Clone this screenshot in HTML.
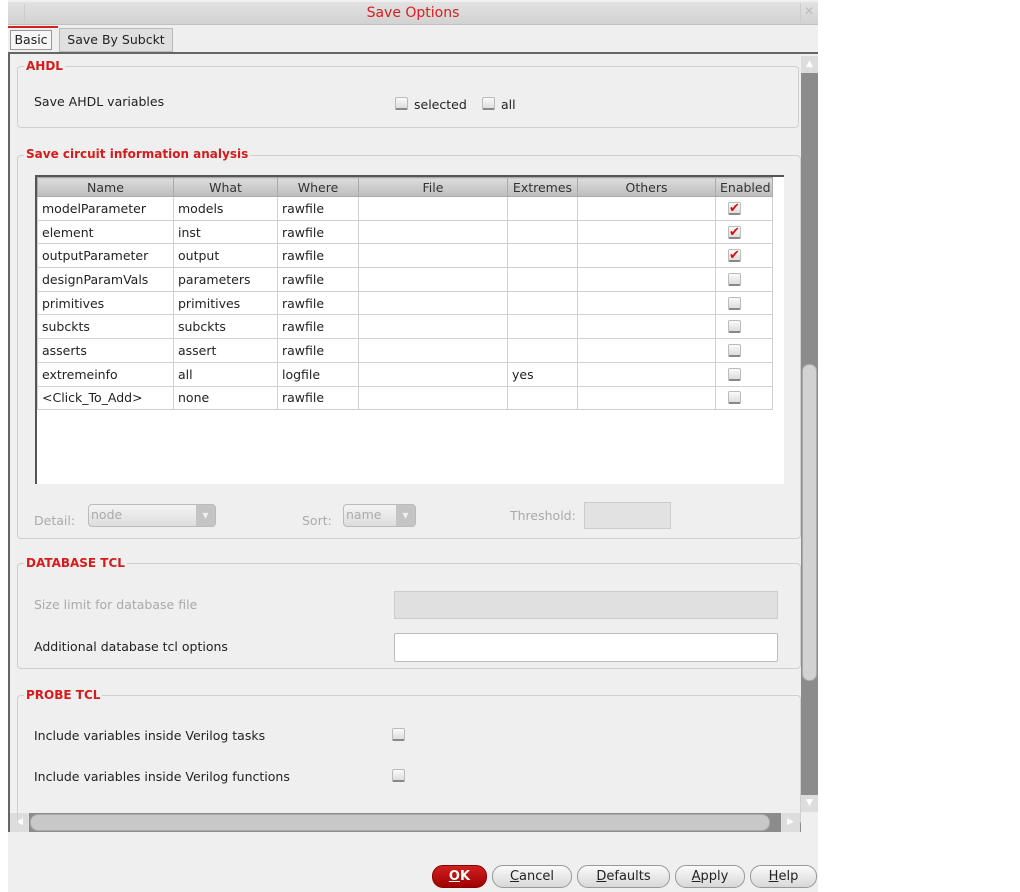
<!DOCTYPE html>
<html><head><meta charset="utf-8"><style>
*{box-sizing:border-box;margin:0;padding:0}
body{width:1020px;height:892px;background:#fff;font-family:"DejaVu Sans","Liberation Sans",sans-serif;font-size:12.5px;color:#222;position:relative;overflow:hidden}
.a{position:absolute}
.win{left:8px;top:0;width:810px;height:892px;background:#efefef}
.title{left:8px;top:2px;width:810px;height:23px;background:linear-gradient(#e2e2e2,#d2d2d2);border-bottom:1px solid #c0c0c0;text-align:center;color:#d42020;font-size:14px;line-height:23px}
.grp{border:1px solid #cfcfcf;border-radius:4px}
.lg{color:#d41c1c;font-weight:bold;font-size:12px;background:#efefef;padding:0 2px}
.cb{width:13px;height:13px;border:1px solid #bbb;border-bottom:2px solid #888;border-radius:2px;background:linear-gradient(#fafafa,#ddd)}
table{border-collapse:collapse;background:#fff;table-layout:fixed}
td,th{border:1px solid #d0d0d0;height:23.7px;padding:0 4px;font-weight:normal;text-align:left;white-space:nowrap;overflow:hidden}
th{height:19px;background:linear-gradient(#dcdcdc,#bdbdbd);text-align:center;border-color:#aaa;color:#333}
.btn{top:865px;height:23px;border:1px solid #999;border-radius:11px;background:linear-gradient(#fafafa,#d8d8d8);text-align:center;line-height:21px;font-size:13px}
.dis{color:#aaa}
.chk{color:#d01010;font-weight:bold;font-size:13px;line-height:11px;text-align:center}
</style></head><body>
<div class="a win"></div>
<div class="a title">Save Options</div>
<div class="a" style="left:9px;top:4px;width:16px;height:18px;border-right:1px solid #ccc"></div>
<div class="a" style="left:800px;top:4px;width:17px;height:18px;border-left:1px solid #ccc;color:#bbb;font-size:12px;text-align:center">✕</div>
<div class="a" style="left:8px;top:26px;width:50px;height:2px;background:#d42020"></div>
<div class="a" style="left:10px;top:30px;width:42px;height:20px;border:1px solid #999;background:#f6f6f6;line-height:18px;text-align:center;font-size:12.5px">Basic</div>
<div class="a" style="left:59px;top:28px;width:114px;height:24px;border:1px solid #bbb;background:#e0e0e0;line-height:22px;text-align:center;font-size:12.5px">Save By Subckt</div>
<div class="a" style="left:8px;top:52px;width:810px;height:2px;background:#666"></div>
<div class="a" style="left:8px;top:52px;width:2px;height:780px;background:#666"></div>
<div class="a" style="left:801px;top:56px;width:17px;height:756px;background:#8c8c8c"></div>
<div class="a" style="left:801px;top:56px;width:17px;height:17px;background:#ddd;color:#fff;font-size:9px;text-align:center;line-height:17px">▲</div>
<div class="a" style="left:802px;top:364px;width:15px;height:317px;background:#d2d2d2;border-radius:7px;border:1px solid #aaa"></div>
<div class="a" style="left:801px;top:795px;width:17px;height:17px;background:#ddd;color:#fff;font-size:9px;text-align:center;line-height:17px">▼</div>
<div class="a" style="left:10px;top:813px;width:791px;height:19px;background:#8c8c8c"></div>
<div class="a" style="left:10px;top:813px;width:19px;height:19px;background:#ddd;color:#fff;font-size:9px;text-align:center;line-height:19px">◀</div>
<div class="a" style="left:30px;top:814px;width:740px;height:17px;background:#c8c8c8;border-radius:8px;border:1px solid #aaa"></div>
<div class="a" style="left:781px;top:813px;width:19px;height:19px;background:#ddd;color:#fff;font-size:9px;text-align:center;line-height:19px">▶</div>

<div class="a grp" style="left:17px;top:66px;width:782px;height:62px"></div>
<div class="a lg" style="left:24px;top:59px">AHDL</div>
<div class="a" style="left:34px;top:94px">Save AHDL variables</div>
<div class="a cb" style="left:395px;top:97px"></div><div class="a" style="left:414px;top:97px">selected</div>
<div class="a cb" style="left:482px;top:97px"></div><div class="a" style="left:501px;top:97px">all</div>

<div class="a grp" style="left:17px;top:155px;width:784px;height:384px"></div>
<div class="a lg" style="left:24px;top:147px">Save circuit information analysis</div>
<div class="a" style="left:35px;top:175px;width:749px;height:309px;background:#fff;border-left:2px solid #555;border-top:2px solid #555"></div>
<table class="a" style="left:37px;top:177px;width:735px">
<colgroup><col style="width:136px"><col style="width:104px"><col style="width:81px"><col style="width:149px"><col style="width:70px"><col style="width:138px"><col style="width:57px"></colgroup>
<tr><th>Name</th><th>What</th><th>Where</th><th>File</th><th>Extremes</th><th>Others</th><th>Enabled</th></tr>
<tr><td>modelParameter</td><td>models</td><td>rawfile</td><td></td><td></td><td></td><td><div class="cb chk" style="margin-left:8px">✔</div></td></tr>
<tr><td>element</td><td>inst</td><td>rawfile</td><td></td><td></td><td></td><td><div class="cb chk" style="margin-left:8px">✔</div></td></tr>
<tr><td>outputParameter</td><td>output</td><td>rawfile</td><td></td><td></td><td></td><td><div class="cb chk" style="margin-left:8px">✔</div></td></tr>
<tr><td>designParamVals</td><td>parameters</td><td>rawfile</td><td></td><td></td><td></td><td><div class="cb" style="margin-left:8px"></div></td></tr>
<tr><td>primitives</td><td>primitives</td><td>rawfile</td><td></td><td></td><td></td><td><div class="cb" style="margin-left:8px"></div></td></tr>
<tr><td>subckts</td><td>subckts</td><td>rawfile</td><td></td><td></td><td></td><td><div class="cb" style="margin-left:8px"></div></td></tr>
<tr><td>asserts</td><td>assert</td><td>rawfile</td><td></td><td></td><td></td><td><div class="cb" style="margin-left:8px"></div></td></tr>
<tr><td>extremeinfo</td><td>all</td><td>logfile</td><td></td><td>yes</td><td></td><td><div class="cb" style="margin-left:8px"></div></td></tr>
<tr><td>&lt;Click_To_Add&gt;</td><td>none</td><td>rawfile</td><td></td><td></td><td></td><td><div class="cb" style="margin-left:8px"></div></td></tr>
</table>
<div class="a dis" style="left:34px;top:513px">Detail:</div>
<div class="a" style="left:88px;top:504px;width:128px;height:23px;border:1px solid #bbb;border-radius:4px;background:linear-gradient(#f4f4f4,#ddd);color:#aaa;padding-left:2px;line-height:20px">node</div>
<div class="a" style="left:196px;top:505px;width:19px;height:21px;background:#c4c4c4;color:#eee;font-size:8px;text-align:center;line-height:21px">▼</div>
<div class="a dis" style="left:302px;top:513px">Sort:</div>
<div class="a" style="left:343px;top:504px;width:73px;height:23px;border:1px solid #bbb;border-radius:4px;background:linear-gradient(#f4f4f4,#ddd);color:#aaa;padding-left:2px;line-height:20px">name</div>
<div class="a" style="left:396px;top:505px;width:19px;height:21px;background:#c4c4c4;color:#eee;font-size:8px;text-align:center;line-height:21px">▼</div>
<div class="a dis" style="left:510px;top:508px">Threshold:</div>
<div class="a" style="left:584px;top:502px;width:87px;height:27px;background:#e2e2e2;border:1px solid #ccc"></div>

<div class="a grp" style="left:17px;top:563px;width:784px;height:106px"></div>
<div class="a lg" style="left:24px;top:556px">DATABASE TCL</div>
<div class="a dis" style="left:34px;top:597px">Size limit for database file</div>
<div class="a" style="left:394px;top:591px;width:384px;height:28px;background:#e0e0e0;border:1px solid #ccc"></div>
<div class="a" style="left:34px;top:639px">Additional database tcl options</div>
<div class="a" style="left:394px;top:633px;width:384px;height:29px;background:#fff;border:1px solid #bbb;border-radius:2px"></div>

<div class="a grp" style="left:17px;top:695px;width:784px;height:130px;border-bottom:none"></div>
<div class="a lg" style="left:24px;top:688px">PROBE TCL</div>
<div class="a" style="left:34px;top:728px">Include variables inside Verilog tasks</div>
<div class="a cb" style="left:392px;top:728px"></div>
<div class="a" style="left:34px;top:769px">Include variables inside Verilog functions</div>
<div class="a cb" style="left:392px;top:769px"></div>

<div class="a btn" style="left:432px;width:55px;background:linear-gradient(#d02020,#a00000);border-color:#800;color:#fff;font-weight:bold"><u>O</u>K</div>
<div class="a btn" style="left:492px;width:80px"><u>C</u>ancel</div>
<div class="a btn" style="left:577px;width:93px"><u>D</u>efaults</div>
<div class="a btn" style="left:675px;width:70px"><u>A</u>pply</div>
<div class="a btn" style="left:750px;width:67px"><u>H</u>elp</div>
</body></html>
